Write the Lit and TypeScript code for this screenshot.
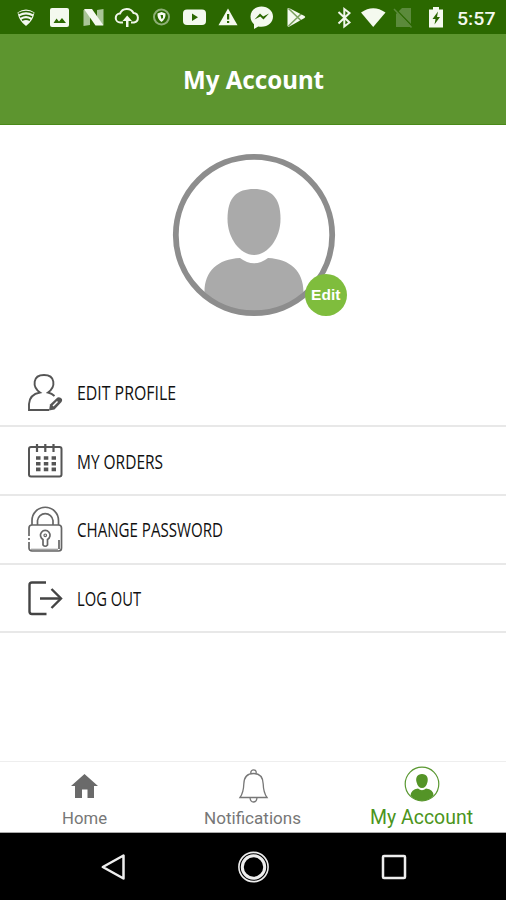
import { LitElement, html, css, svg } from "lit";
import { customElement, property } from "lit/decorators.js";

const reset = css`
  * { box-sizing: border-box; }
  svg { display: block; overflow: visible; flex: none; }
`;

/* Single-line label whose text is fitted to a given width. */
const fitted = (text: string, width: number, size: number, baseline: number, height: number) => html`
  <svg class="label" width=${width} height=${height}>
    <text x="0" y=${baseline} font-size=${size} textLength=${width} lengthAdjust="spacingAndGlyphs">${text}</text>
  </svg>`;

@customElement("status-bar")
class StatusBar extends LitElement {
  static styles = [reset, css`
    :host { display: block; height: 34px; background: #2b6800; }
    svg { fill: #f4f9ef; }
    .clock { font: 500 18px Roboto, sans-serif; }
    .line { fill: none; stroke: #f0f6ea; stroke-width: 2; }
    .cut { fill: #2b6800; }
    .thin { fill: none; stroke: #2b6800; stroke-width: 1.6; }
    .dim { fill: #5b8a3b; }
    .pale { fill: #a9c597; }
  `];
  render() {
    return html`<svg width="506" height="34" viewBox="0 0 506 34">
      <path d="M17.500 12.500Q26 6.500 34.500 12.500Q33 21 26 26Q19 21 17.500 12.500Z"/>
      <path class="thin" d="M18.500 13.500Q26 9.500 33.500 13.500M20 17Q26 13.500 32 17M22 20.300Q26 18 30 20.300"/>
      <rect x="50" y="8" width="19" height="19" rx="2"/>
      <path class="cut" d="M53.500 23L56.500 18.500L59 21.500L62 18L66 23Z"/>
      <path class="pale" d="M83.500 10H90V25L83.500 26ZM97 10L103.500 9V25H97Z"/>
      <path d="M84 9H92L103.500 25.500H95.500Z"/>
      <path class="line" d="M123 22.500H120.500A4.500 4.500 0 0 1 120 13.500A7.500 7.500 0 0 1 133.500 13A4.800 4.800 0 0 1 134 22.500H131"/>
      <path d="M126 27V21H122.500L127.200 15.500L132 21H128.500V27Z"/>
      <circle class="line" cx="161.500" cy="17" r="7.500" stroke-opacity=".5"/>
      <path d="M157.500 13.500L161.500 12L165.500 13.500Q166 19 161.500 22Q157 19 157.500 13.500Z"/>
      <path class="cut" d="M160.500 15H163V18L161.500 19Z"/>
      <rect x="183" y="9.500" width="23" height="15.500" rx="4"/>
      <path class="cut" d="M192 13.500L198 17.200L192 21Z"/>
      <path d="M228 8.500L237.500 25.300H218.500Z"/>
      <path class="cut" d="M227 14H229.200V19.500H227ZM227 21H229.200V23H227Z"/>
      <path d="M261.500 6.500C255 6.500 250.500 11 250.500 16.500C250.500 20 252 22.500 254 24.300V29L258.300 26.500C267 28 273 23 273 16.500C273 11 268 6.500 261.500 6.500Z"/>
      <path class="cut" d="M254.500 19.500L260 13.500L263.200 16.500L269 13.500L263.500 19.500L260.300 16.500Z"/>
      <path d="M287.500 8.500Q288 7.500 289.500 8.200L304.500 16Q306 17 304.500 18L289.500 26.500Q288 27 287.500 26Z"/>
      <path class="thin" stroke-opacity=".6" d="M288.500 8.500L301.500 21M288.500 26L301.500 13.500"/>
      <path class="line" stroke-width="2.500" d="M338.500 12L349.500 22.500L344.300 26.500V9L349.500 13L338.500 23.500"/>
      <path d="M361 12.500Q373.200 4 385.500 12.500L373.200 27Z"/>
      <path class="dim" d="M402 8H411V27H396V14Z"/>
      <path class="thin" d="M395 8.500L412 26"/>
      <path stroke="#5b8a3b" stroke-width="1.500" d="M394 9L411.500 27.500"/>
      <path d="M429 9.500H433V7H439V9.500H443V27.500H429Z"/>
      <path class="cut" d="M438 11.500L432.500 19H435.500L434.500 24.500L440 17H437Z"/>
      <text class="clock" x="457" y="24.500" textLength="38.500" lengthAdjust="spacingAndGlyphs">5:57</text>
    </svg>`;
  }
}

@customElement("profile-photo")
class ProfilePhoto extends LitElement {
  static styles = [reset, css`
    :host { display: block; position: relative; width: 162px; height: 162px; }
    .badge { position: absolute; left: 132px; top: 120px; width: 42px; height: 42px; border-radius: 50%;
      background: #7fbd3d; color: #fff; display: grid; place-items: center;
      font: bold 15.500px/42px "Liberation Sans", sans-serif; }
  `];
  render() {
    return html`<svg width="162" height="162" viewBox="0 0 162 162">
      <path fill="#aaa" d="M81 35C98 35 107.500 43 107.500 65C107.500 84 95 101 81 101C67 101 54.500 84 54.500 65C54.500 43 64 35 81 35Z"/>
      <path fill="#aaa" d="M67 104Q81 114.500 95 104C117 105 130.500 117 130.500 138Q111 159 81 159Q51 159 31.500 138C31.500 117 45 105 67 104Z"/>
      <circle cx="81" cy="81" r="78.200" fill="none" stroke="#8d8d8d" stroke-width="5.800"/>
    </svg><span class="badge">Edit</span>`;
  }
}

const menuIcons: Record<string, unknown> = {
  profile: svg`<g fill="none" stroke="#555" stroke-width="1.900">
    <path d="M21 36H1V30Q1.500 20.500 12 18.500C4 13 4.500 1 16 1C27.500 1 28 13 20 18.500Q24 19.500 26.500 22"/></g>
    <path fill="#555" d="M21 36.500L22 30.500L29.500 23.500Q32 22.500 34 25Q34.500 26.500 33.500 28L26.500 35.500Z"/>
    <path stroke="#fff" stroke-width="1.500" d="M25 32L29.500 27.500"/>`,
  orders: svg`<rect x="1" y="4" width="32.500" height="29.500" rx="2" fill="none" stroke="#555" stroke-width="2"/>
    <path stroke="#555" stroke-width="2.200" d="M9 1V9M17.300 1V9M25.500 1V9"/>
    <path stroke="#555" stroke-width="3.600" stroke-dasharray="4.500 3.300" d="M8 15H28M8 20.700H28M8 26.400H28"/>`,
  password: svg`<g fill="none" stroke="#666" stroke-width="1.700">
    <path d="M4 19V14.500A13.200 13.200 0 0 1 30.500 14.500V19M9.500 19V14.500A7.800 7.800 0 0 1 25 14.500V19"/>
    <rect x="1" y="19" width="32.500" height="26" rx="3"/>
    <path d="M15 33.500A4.800 4.800 0 1 1 19.500 33.500V39Q17.200 41.500 15 39Z"/>
    <circle cx="17.250" cy="29.300" r="1.300" stroke-width="1.200"/>
    <path stroke-opacity=".6" d="M3 43.500H30"/><path d="M31 43V34"/></g>
    <path stroke="#fff" stroke-width="1.800" d="M0 31H2.500M0 35H2.500M30 33H32"/>`,
  logout: svg`<g fill="none" stroke="#444" stroke-width="2.400">
    <path d="M18 1.500H4Q1.500 1.500 1.500 4V30.500Q1.500 33 4 33H18.500M12 17.500H33"/>
    <path d="M23.500 8L33 17.500L23.500 27"/></g>`,
};

@customElement("menu-row")
class MenuRow extends LitElement {
  @property() icon = "";
  @property() text = "";
  @property({ type: Number }) fit = 100;
  @property({ type: Number }) size = 37;
  static styles = [reset, css`
    :host { display: flex; align-items: center; gap: 14.500px; height: 68.700px; padding: 0 28px;
      border-bottom: 2px solid #e8e8e8; }
    .label { font-family: "Open Sans", "Noto Sans", sans-serif; fill: #111; }
  `];
  render() {
    return html`<svg width="34.500" height=${this.size}>${menuIcons[this.icon]}</svg>
      ${fitted(this.text, this.fit, 20, 19.5, 24)}`;
  }
}

@customElement("tab-bar")
class TabBar extends LitElement {
  static styles = [reset, css`
    :host { display: grid; grid-template-columns: 1fr 1fr 1fr; height: 72px;
      border-top: 1.500px solid #eee; border-bottom: 1px solid #aaa; background: #fff; }
    .tab { display: flex; flex-direction: column; align-items: center; padding-top: 4px; gap: 1px; }
    .label { font-family: Roboto, sans-serif; fill: #777; }
    .active .label { fill: #4b941b; }
  `];
  render() {
    return html`
      <div class="tab"><svg width="28" height="36">
        <path fill="#6a6a6a" d="M14.500 8L28 20H24V32H17.500V23.500H12V32H5V20H1Z"/></svg>
        ${fitted("Home", 45, 17, 20.5, 26)}</div>
      <div class="tab"><svg width="30" height="36" fill="none" stroke="#777" stroke-width="1.300">
        <circle cx="15.500" cy="6.500" r="2.700"/>
        <path fill="#fff" d="M15.500 7.500C22 7.500 25 12 25.200 18C25.400 25 26.500 28 29 31.500H2C4.500 28 5.600 25 5.800 18C6 12 9 7.500 15.500 7.500Z"/>
        <path d="M12 31.500C12.500 37.500 18.500 37.500 19 31.500"/></svg>
        ${fitted("Notifications", 97, 17, 20.5, 26)}</div>
      <div class="tab active"><svg width="36" height="36">
        <circle cx="18" cy="18" r="16.800" fill="#fff" stroke="#5a9831" stroke-width="1.200"/>
        <path fill="#549427" d="M18 8C23 8 24.500 12 23.500 16Q22 22 18 22Q14 22 12.500 16C11.500 12 13 8 18 8ZM14 22.500Q18 26 22 22.500Q29.500 23.500 29.500 29.500Q25 34.800 18 34.800Q11 34.800 6.500 29.500Q7 23.500 14 22.500Z"/></svg>
        ${fitted("My Account", 103, 20, 20.5, 26)}</div>`;
  }
}

@customElement("system-nav")
class SystemNav extends LitElement {
  static styles = [reset, css`
    :host { display: flex; align-items: center; justify-content: space-between; height: 67px;
      padding: 0 99px 0 100px; background: #000; }
    svg { fill: none; stroke: #eee; stroke-width: 2.500; stroke-linejoin: round; }
  `];
  render() {
    return html`
      <svg width="26" height="32"><path d="M23.500 4.500V27.500L2.800 16Z"/></svg>
      <svg width="32" height="32"><circle cx="15.500" cy="16" r="11.200" stroke-width="3"/><circle cx="15.500" cy="16" r="14.600" stroke-width="1.600"/></svg>
      <svg width="26" height="32"><rect x="2" y="5" width="22" height="22" rx="1"/></svg>`;
  }
}

@customElement("app-root")
class AppRoot extends LitElement {
  static styles = [reset, css`
    :host { display: flex; flex-direction: column; width: 506px; height: 900px; background: #fff; overflow: hidden; }
    .header { display: flex; justify-content: center; height: 91px; padding-top: 30px;
      background: #5d952f; border-bottom: 1.500px solid #4a8918; }
    .header .label { font-family: "Noto Sans", "Open Sans", sans-serif; font-weight: 700; fill: #fff; }
    .photo { display: flex; justify-content: center; padding: 28.500px 0 43.200px 1.500px; }
    .menu { flex: 1; }
  `];
  render() {
    return html`
      <status-bar></status-bar>
      <header class="header">${fitted("My Account", 141, 25, 25, 32)}</header>
      <div class="photo"><profile-photo></profile-photo></div>
      <nav class="menu">
        <menu-row icon="profile" text="EDIT PROFILE" fit="99" size="37"></menu-row>
        <menu-row icon="orders" text="MY ORDERS" fit="86" size="35"></menu-row>
        <menu-row icon="password" text="CHANGE PASSWORD" fit="146" size="47"></menu-row>
        <menu-row icon="logout" text="LOG OUT" fit="64" size="35"></menu-row>
      </nav>
      <tab-bar></tab-bar>
      <system-nav></system-nav>`;
  }
}
